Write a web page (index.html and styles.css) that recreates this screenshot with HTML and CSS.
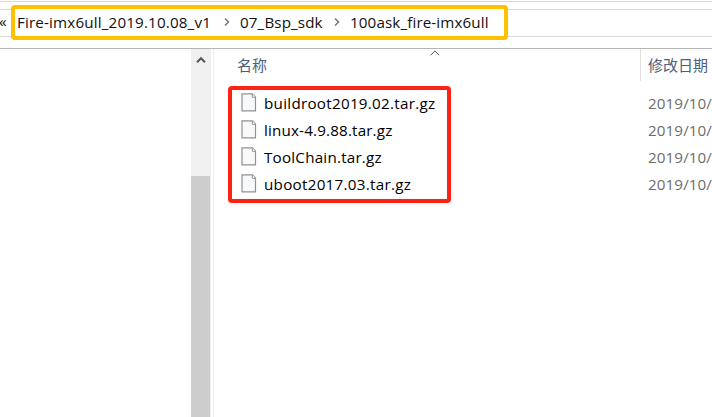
FILE: index.html
```html
<!DOCTYPE html>
<html lang="zh-CN">
<head>
<meta charset="utf-8">
<title>100ask_fire-imx6ull</title>
<link rel="stylesheet" href="styles.css">
</head>
<body>
<div class="window">
  <header class="toolbar">
    <nav class="address">
      <span class="overflow">«</span>
      <div class="path">
        <span class="crumb root">Fire-imx6ull_2019.10.08_v1</span>
        <svg class="chevron" viewBox="0 0 8 10"><path d="M2 1.5 5.5 5 2 8.5"/></svg>
        <span class="crumb sdk">07_Bsp_sdk</span>
        <svg class="chevron" viewBox="0 0 8 10"><path d="M2 1.5 5.5 5 2 8.5"/></svg>
        <span class="crumb leaf">100ask_fire-imx6ull</span>
      </div>
    </nav>
  </header>
  <main class="content">
    <aside class="tree"></aside>
    <div class="scrollbar">
      <svg class="up" viewBox="0 0 10 8"><path d="M1 6.2 5 2.2 9 6.2"/></svg>
      <div class="thumb"></div>
    </div>
    <section class="listing">
      <div class="columns">
        <div class="col-name">名称<svg class="sort" viewBox="0 0 10 6"><path d="M.7 5.2 5 .9 9.3 5.2"/></svg></div>
        <div class="col-date">修改日期</div>
      </div>
      <div class="rows">
        <div class="files">
          <div class="file"><svg class="doc" viewBox="0 0 16 19"><path d="M1 .8H11.5L14.5 4V17.8H1Z"/><path class="fold" d="M11.3 1V4.3H14.4"/></svg><span class="n1">buildroot2019.02.tar.gz</span></div>
          <div class="file"><svg class="doc" viewBox="0 0 16 19"><path d="M1 .8H11.5L14.5 4V17.8H1Z"/><path class="fold" d="M11.3 1V4.3H14.4"/></svg><span class="n2">linux-4.9.88.tar.gz</span></div>
          <div class="file"><svg class="doc" viewBox="0 0 16 19"><path d="M1 .8H11.5L14.5 4V17.8H1Z"/><path class="fold" d="M11.3 1V4.3H14.4"/></svg><span class="n3">ToolChain.tar.gz</span></div>
          <div class="file"><svg class="doc" viewBox="0 0 16 19"><path d="M1 .8H11.5L14.5 4V17.8H1Z"/><path class="fold" d="M11.3 1V4.3H14.4"/></svg><span class="n4">uboot2017.03.tar.gz</span></div>
        </div>
        <div class="dates">
          <span>2019/10/</span><span>2019/10/</span><span>2019/10/</span><span>2019/10/</span>
        </div>
      </div>
    </section>
  </main>
</div>
</body>
</html>
```
FILE: styles.css
```css
* { box-sizing: border-box; }
body {
  margin: 0;
  background: #fff;
  color: #111;
  font: 15.2px/27px "Open Sans", "Noto Sans CJK SC", sans-serif;
  white-space: nowrap;
}
svg { display: block; flex: none; fill: none; }
.window { width: 712px; height: 417px; overflow: hidden; display: flex; flex-direction: column; }
.toolbar { flex: none; margin-top: 1px; height: 48px; border-top: 1px solid #d9d9d9; border-bottom: 1px solid #b5b5b5; padding-top: 7px; }
.address { height: 28px; border: solid #d9d9d9; border-width: 1px 0; display: flex; align-items: center; }
.overflow { width: 11px; flex: none; line-height: 24px; margin-top: -5px; margin-left: -1px; }
.path {
  width: 497px; height: 35px; flex: none; margin: -2px 0 0 1px;
  border: 4px solid #ffc000; border-radius: 4px; background: #fff;
  display: flex; align-items: center; padding-left: 2px;
}
.crumb { flex: none; }
.root { width: 206px; letter-spacing: .16px; }
.sdk { width: 92px; letter-spacing: .12px; }
.leaf { letter-spacing: .12px; }
.chevron { width: 8px; height: 10px; margin-right: 9px; stroke: #777; stroke-width: 1.5; }
.chevron + .sdk { width: 93px; }
.content { flex: 1; display: flex; min-height: 0; }
.tree { width: 191px; }
.scrollbar { width: 20px; background: #f0f0f0; display: flex; flex-direction: column; align-items: center; padding-top: 7px; }
.up { width: 10px; height: 8px; stroke: #555; stroke-width: 2; }
.thumb { width: 19px; align-self: flex-start; flex: 1; margin-top: 112px; background: #cdcdcd; }
.listing { flex: 1; min-width: 0; margin-left: 2px; border-left: 1px solid #ededed; }
.columns { display: flex; height: 32px; color: #4c607a; font-size: 15px; line-height: 32px; }
.col-name { width: 427px; padding-left: 23px; border-right: 1px solid #e1e1e1; display: flex; }
.sort { width: 10px; height: 6px; margin: 1px 0 0 163px; stroke: #555; stroke-width: 1; }
.col-date { padding-left: 7px; }
.rows { display: flex; padding: 6px 0 0 14px; }
.files { width: 223px; height: 117px; flex: none; border: 4px solid #ff2116; border-radius: 4px; padding: 0 0 0 9px; margin-top: -1px; }
.file { height: 27px; display: flex; align-items: center; color: #000; }
.doc { width: 16px; height: 19px; margin: -3px 7px 0 0; stroke: #919191; stroke-width: 1.2; fill: #f8f9fa; }
.fold { fill: #fff; stroke-width: 1; }
.n1 { letter-spacing: .28px; }
.n2 { letter-spacing: .17px; }
.n3 { letter-spacing: .22px; }
.n4 { letter-spacing: .28px; }
.dates { display: flex; flex-direction: column; margin: 3px 0 0 197px; color: #6d6d6d; letter-spacing: .1px; }
```
